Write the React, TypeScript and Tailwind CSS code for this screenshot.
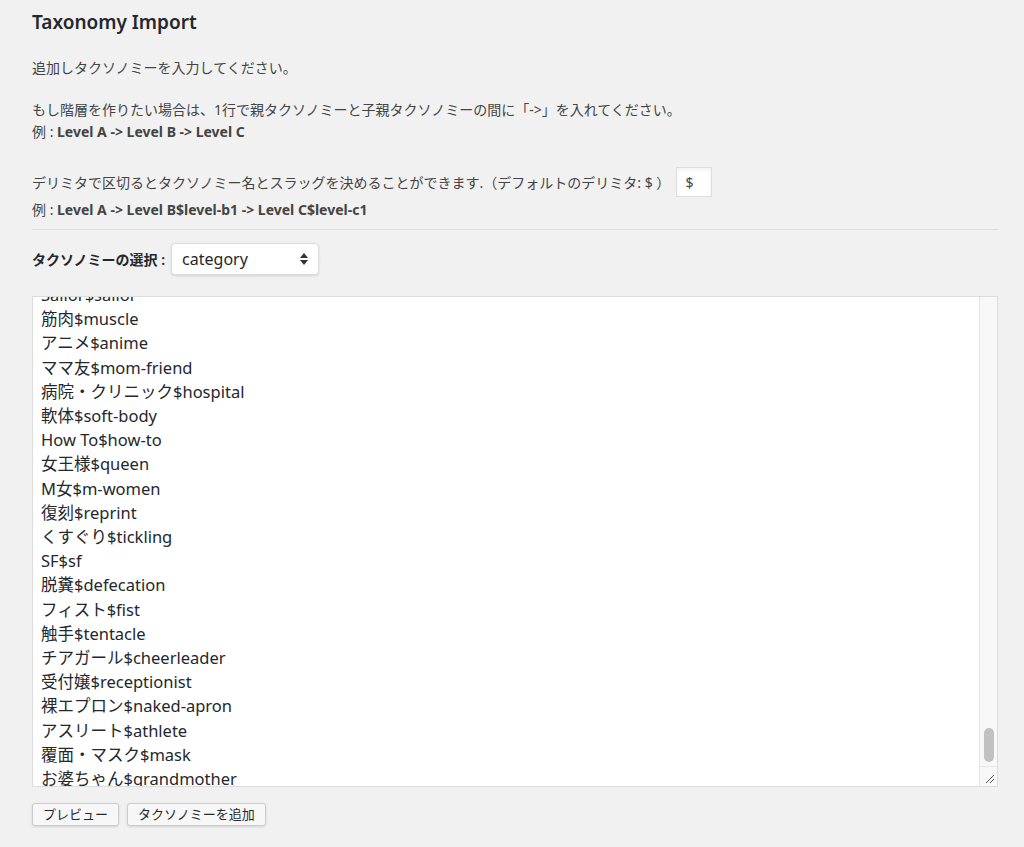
const lines = [
  '筋肉$muscle', 'アニメ$anime', 'ママ友$mom-friend', '病院・クリニック$hospital', '軟体$soft-body',
  'How To$how-to', '女王様$queen', 'M女$m-women', '復刻$reprint', 'くすぐり$tickling', 'SF$sf',
  '脱糞$defecation', 'フィスト$fist', '触手$tentacle', 'チアガール$cheerleader', '受付嬢$receptionist',
  '裸エプロン$naked-apron', 'アスリート$athlete', '覆面・マスク$mask', 'お婆ちゃん$grandmother',
];

export default function App() {
  return (
    <div
      className="min-h-[847px] bg-[#f1f1f1] text-[#23282d] pl-[32px] pr-[26px] pt-[8px]"
      style={{ fontFamily: '"Noto Sans", "Noto Sans CJK JP", sans-serif' }}
    >
      <h1 className="text-[19px] font-semibold leading-[28px]">Taxonomy Import</h1>
      <p className="text-[14px] mt-[22px] leading-[20px] text-[#444]">追加しタクソノミーを入力してください。</p>
      <p className="text-[14px] mt-[21px] leading-[22px] text-[#444]">
        もし階層を作りたい場合は、1行で親タクソノミーと子親タクソノミーの間に「-&gt;」を入れてください。
        <br />
        例 : <b>Level A -&gt; Level B -&gt; Level C</b>
      </p>
      <div className="flex items-center gap-[6px] mt-[24px] text-[14px] text-[#444]">
        <span>デリミタで区切るとタクソノミー名とスラッグを決めることができます.（デフォルトのデリミタ: $ ）</span>
        <div className="w-[36px] h-[30px] bg-white border border-[#ddd] shadow-inner flex items-center px-[8px] text-[14px]">$</div>
      </div>
      <p className="text-[14px] mt-[2px] leading-[22px] text-[#444]">
        例 : <b>Level A -&gt; Level B$level-b1 -&gt; Level C$level-c1</b>
      </p>
      <div className="border-t border-[#ddd] mt-[8px]" />
      <div className="flex items-center gap-[6px] mt-[13px]">
        <span className="text-[14px] font-semibold">タクソノミーの選択 :</span>
        <div className="w-[148px] h-[32px] bg-white border border-[#ddd] rounded-[4px] shadow flex items-center justify-between px-[10px] text-[16px]">
          <span>category</span>
          <svg width="8" height="12" viewBox="0 0 8 12">
            <path d="M4 0 L8 5 H0 Z M4 12 L8 7 H0 Z" fill="#333" />
          </svg>
        </div>
      </div>
      <div className="mt-[21px] h-[491px] bg-white border border-[#ddd] flex overflow-hidden">
        <div className="flex-1 overflow-hidden pl-[8px] text-[16.5px] leading-[24.2px]">
          <div className="-mt-[14px]">Sailor$sailor</div>
          {lines.map((l) => (
            <div key={l}>{l}</div>
          ))}
        </div>
        <div className="w-[18px] border-l border-[#e6e6e6] bg-[#f8f8f8] flex flex-col">
          <div className="flex-1 flex flex-col justify-end items-center pb-[4px]">
            <div className="w-[10px] h-[34px] rounded-full bg-[#c1c1c1]" />
          </div>
          <div className="h-[20px] border-t border-[#e6e6e6] flex items-end justify-end p-[2px]">
            <svg width="10" height="10" viewBox="0 0 10 10">
              <path d="M1 9 L9 1 M5 9 L9 5" stroke="#555" strokeWidth="1" />
            </svg>
          </div>
        </div>
      </div>
      <div className="flex gap-[8px] mt-[16px]">
        <button className="h-[23px] px-[10px] text-[13px] bg-[#f7f7f7] border border-[#ccc] rounded-[3px] shadow-sm">プレビュー</button>
        <button className="h-[23px] px-[10px] text-[13px] bg-[#f7f7f7] border border-[#ccc] rounded-[3px] shadow-sm">タクソノミーを追加</button>
      </div>
    </div>
  );
}
